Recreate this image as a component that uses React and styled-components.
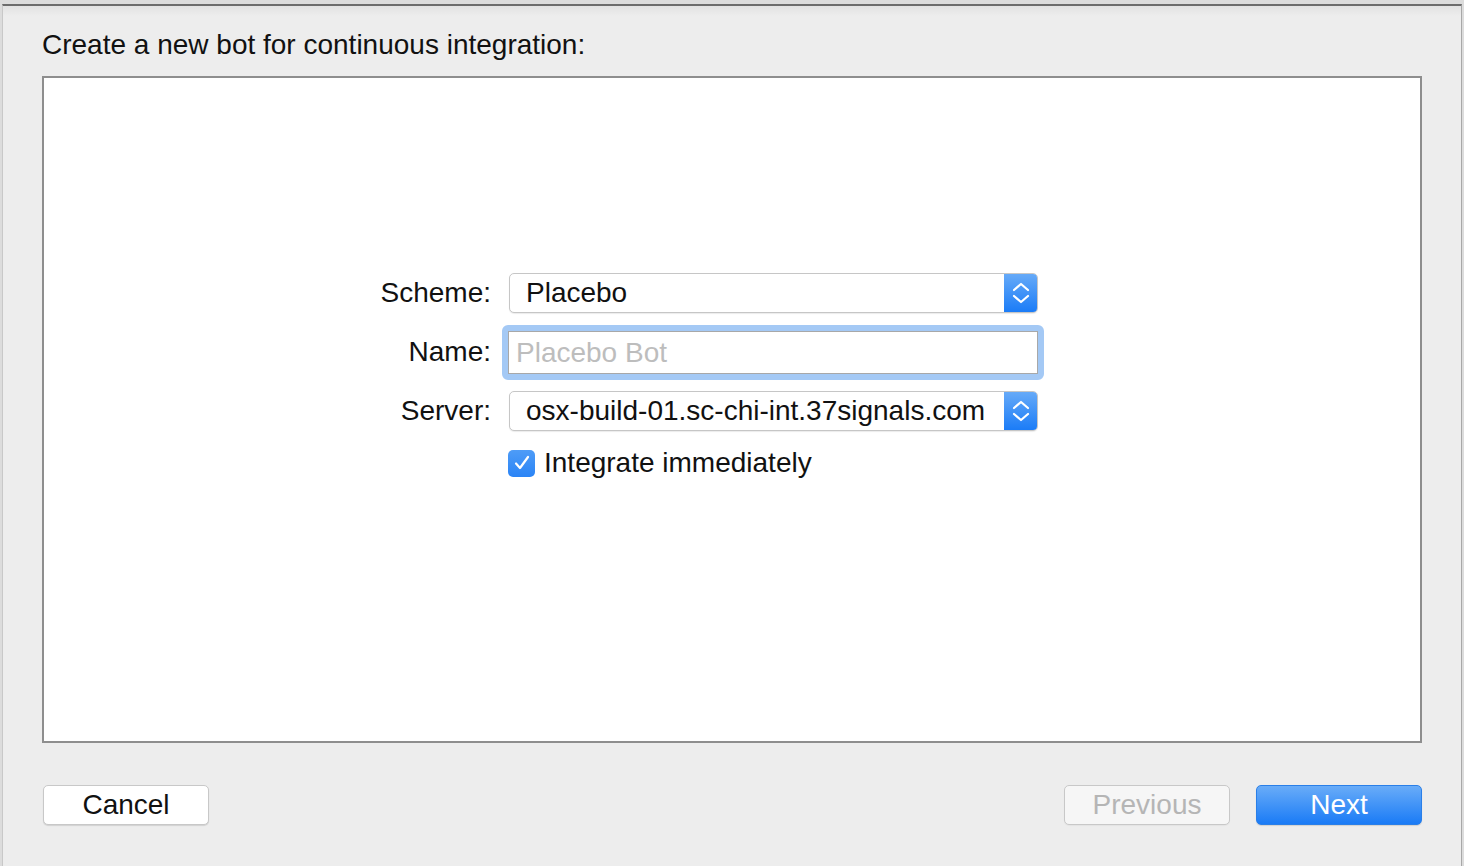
import React from "react";
import styled, { createGlobalStyle } from "styled-components";

const GlobalStyle = createGlobalStyle`
    html, body {
        margin: 0;
        padding: 0;
        background: #e4e4e4;
        font-family: "Liberation Sans", Arial, sans-serif;
    }
`;

const Window = styled.div`
    width: 1464px;
    height: 866px;
    box-sizing: border-box;
    padding-top: 4px;
    background: #dcdcdc;
    overflow: hidden;
`;

const Sheet = styled.div`
    height: 862px;
    box-sizing: border-box;
    margin: 0 2px 0 2px;
    border-top: 2px solid #6c6c6c;
    border-right: 1px solid #a8a8a8;
    border-left: 1px solid #c8c8c8;
    background: linear-gradient(#e2e2e2, #ededed 10px, #ededed);
    display: flex;
    flex-direction: column;
    padding: 0 39px 0 39px;
`;

const Title = styled.div`
    font-size: 28px;
    color: #111;
    padding-top: 23px;
    height: 47px;
    line-height: 32px;
`;

const Panel = styled.div`
    height: 667px;
    box-sizing: border-box;
    background: #fff;
    border: 2px solid #8e8e8e;
    display: flex;
    align-items: flex-start;
    padding: 195px 0 0 297px;
`;

const Form = styled.div`
    display: grid;
    grid-template-columns: 150px 529px;
    grid-template-rows: 40px 78px 40px 64px;
    column-gap: 18px;
    align-items: center;
`;

const Label = styled.div`
    font-size: 28px;
    color: #111;
    text-align: right;
    line-height: 40px;
`;

const Popup = styled.div`
    height: 40px;
    box-sizing: border-box;
    border: 1px solid #c6c6c6;
    border-radius: 5px;
    background: #fff;
    display: flex;
    box-shadow: 0 1px 1px rgba(0, 0, 0, 0.08);
    overflow: hidden;
`;

const PopupText = styled.div`
    flex: 1;
    font-size: 28px;
    color: #111;
    line-height: 38px;
    padding-left: 16px;
    white-space: nowrap;
`;

const Arrows = styled.div`
    width: 33px;
    background: linear-gradient(#66aaf8, #1b7cf7);
    display: flex;
    align-items: center;
    justify-content: center;
`;

const FieldRow = styled.div`
    display: flex;
    align-items: center;
    margin: 0 -6px 0 -7px;
`;

const FocusRing = styled.div`
    flex: 1;
    height: 55px;
    box-sizing: border-box;
    border: 6px solid #a4c9f5;
    border-radius: 6px;
    background: #fff;
    display: flex;
`;

const Input = styled.div`
    flex: 1;
    border: 1px solid #a8a8a8;
    font-size: 28px;
    color: #bdbdbd;
    line-height: 41px;
    padding-left: 7px;
`;

const CheckRow = styled.div`
    grid-column: 2;
    display: flex;
    align-items: center;
    gap: 9px;
    margin-left: -1px;
`;

const Box = styled.div`
    width: 27px;
    height: 27px;
    border-radius: 5px;
    background: linear-gradient(#4e9cf7, #2a84f6);
    display: flex;
    align-items: center;
    justify-content: center;
`;

const CheckText = styled.div`
    font-size: 28px;
    color: #111;
`;

const Footer = styled.div`
    display: flex;
    align-items: center;
    padding-top: 42px;
    gap: 26px;
    margin-left: 1px;
`;

const Button = styled.div`
    width: 166px;
    height: 40px;
    box-sizing: border-box;
    border-radius: 5px;
    display: flex;
    align-items: center;
    justify-content: center;
    font-size: 28px;
    border: 1px solid ${p => (p.primary ? "#2a7fe8" : "#c8c8c8")};
    color: ${p => (p.primary ? "#fff" : p.disabled ? "#b5b5b5" : "#111")};
    background: ${p =>
        p.primary ? "linear-gradient(#69acf8, #1a7bf6)" : p.disabled ? "#f6f6f6" : "#fff"};
    box-shadow: 0 1px 1px rgba(0, 0, 0, ${p => (p.disabled ? 0.04 : 0.12)});
`;

const Spacer = styled.div`
    flex: 1;
`;

const UpDown = () => (
    <svg width="18" height="28" viewBox="0 0 18 28" fill="none" stroke="#fff" strokeWidth="2.2" strokeLinecap="round" strokeLinejoin="round">
        <polyline points="2,11 9,5 16,11" />
        <polyline points="2,17 9,23 16,17" />
    </svg>
);

const App = () => {
    return (
        <Window>
            <GlobalStyle />
            <Sheet>
                <Title>Create a new bot for continuous integration:</Title>
                <Panel>
                    <Form>
                        <Label>Scheme:</Label>
                        <Popup>
                            <PopupText>Placebo</PopupText>
                            <Arrows><UpDown /></Arrows>
                        </Popup>
                        <Label>Name:</Label>
                        <FieldRow>
                            <FocusRing>
                                <Input>Placebo Bot</Input>
                            </FocusRing>
                        </FieldRow>
                        <Label>Server:</Label>
                        <Popup>
                            <PopupText>osx-build-01.sc-chi-int.37signals.com</PopupText>
                            <Arrows><UpDown /></Arrows>
                        </Popup>
                        <CheckRow>
                            <Box>
                                <svg width="20" height="20" viewBox="0 0 20 20" fill="none" stroke="#fff" strokeWidth="2.2" strokeLinecap="round" strokeLinejoin="round">
                                    <polyline points="4,10.5 8,15 16,4" />
                                </svg>
                            </Box>
                            <CheckText>Integrate immediately</CheckText>
                        </CheckRow>
                    </Form>
                </Panel>
                <Footer>
                    <Button>Cancel</Button>
                    <Spacer />
                    <Button disabled>Previous</Button>
                    <Button primary>Next</Button>
                </Footer>
            </Sheet>
        </Window>
    );
};

export default App;
